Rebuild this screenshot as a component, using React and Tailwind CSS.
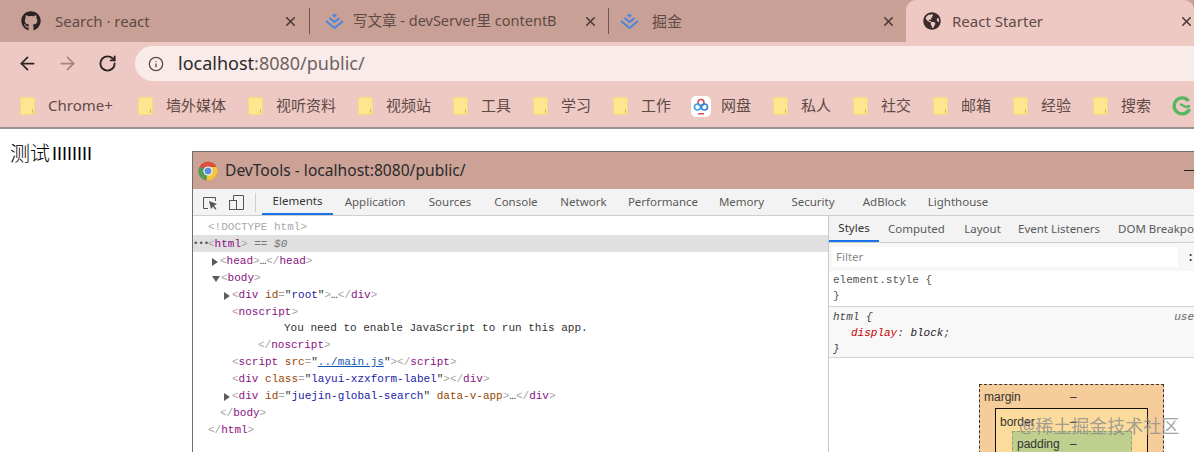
import { ArrowLeft, ArrowRight, RotateCw, Info, X } from 'lucide-react';
import { FaGithub, FaGlobeAmericas } from 'react-icons/fa';

const uiFont = { fontFamily: '"Noto Sans", "Noto Sans CJK SC", sans-serif' };

const bookmarks = [
  { name: 'Chrome+', w: 'w-[118px]' },
  { name: '墙外媒体', w: 'w-[110px]' },
  { name: '视听资料', w: 'w-[110px]' },
  { name: '视频站', w: 'w-[95px]' },
  { name: '工具', w: 'w-[80px]' },
  { name: '学习', w: 'w-[80px]' },
  { name: '工作', w: 'w-[78px]' },
  { name: '网盘', w: 'w-[82px]', pan: true },
  { name: '私人', w: 'w-[80px]' },
  { name: '社交', w: 'w-[80px]' },
  { name: '邮箱', w: 'w-[80px]' },
  { name: '经验', w: 'w-[80px]' },
  { name: '搜索', w: 'w-[79px]' },
];

const devTabs = [
  { name: 'Elements', w: 'w-[71px]', active: true },
  { name: 'Application', w: 'w-[84px]' },
  { name: 'Sources', w: 'w-[66px]' },
  { name: 'Console', w: 'w-[66px]' },
  { name: 'Network', w: 'w-[69px]' },
  { name: 'Performance', w: 'w-[90px]' },
  { name: 'Memory', w: 'w-[67px]' },
  { name: 'Security', w: 'w-[76px]' },
  { name: 'AdBlock', w: 'w-[67px]' },
  { name: 'Lighthouse', w: 'w-[80px]' },
];

function JuejinLogo() {
  return (
    <svg width="19" height="16" viewBox="0 0 19 16" fill="none" className="shrink-0">
      <path d="M9.5 0.5 L12 2.5 L9.5 4.5 L7 2.5 Z" fill="#4a86e0" />
      <path d="M4.5 5 L9.5 9 L14.5 5" stroke="#4a86e0" strokeWidth="2" />
      <path d="M1 8 L9.5 15 L18 8" stroke="#4a86e0" strokeWidth="2" />
    </svg>
  );
}

function ChromeLogo() {
  return (
    <svg width="20" height="20" viewBox="0 0 20 20" className="shrink-0">
      <circle cx="10" cy="10" r="9.5" fill="#d9503f" />
      <path d="M10 10 L1.6 5.5 A9.5 9.5 0 0 0 8.5 19.4 Z" fill="#4f9d58" />
      <path d="M10 6 L18.6 6 A9.5 9.5 0 0 1 8.5 19.4 Z" fill="#f4c63d" />
      <circle cx="10" cy="10" r="4.6" fill="#fff" />
      <circle cx="10" cy="10" r="3.5" fill="#5a8fd8" />
    </svg>
  );
}

function PanLogo() {
  return (
    <div className="flex h-[21px] w-[20px] shrink-0 items-center justify-center rounded-[5px] bg-white">
      <svg width="16" height="18" viewBox="0 0 16 18" fill="none">
        <circle cx="8" cy="5.5" r="3" stroke="#e0484d" strokeWidth="1.6" />
        <circle cx="4.5" cy="10" r="3" stroke="#3aa0e8" strokeWidth="1.6" />
        <circle cx="11.5" cy="10" r="3" stroke="#2f7fe0" strokeWidth="1.6" />
        <rect x="5" y="16" width="6" height="1.5" fill="#e0484d" />
      </svg>
    </div>
  );
}

function ExtensionLogo() {
  return (
    <svg width="20" height="20" viewBox="0 0 20 20" fill="none" className="shrink-0">
      <path d="M16.5 5 A8 8 0 1 0 17.5 13" stroke="#55b860" strokeWidth="3.4" />
      <path d="M8 8 L14 11 L18 10" stroke="#55b860" strokeWidth="2.4" />
    </svg>
  );
}

function Folder() {
  return (
    <div className="relative h-[18px] w-[15px] shrink-0 rounded-[2px] border border-[#f3dc7c] bg-[#fde68f]">
      <div className="absolute bottom-[1px] right-[1px] h-[4px] w-px bg-[#d8b94e]" />
    </div>
  );
}

function Tab({ icon, title, pad, gap, closeGap, width, titleClass = 'text-[15px]' }) {
  return (
    <div className={`flex h-[42px] items-center ${pad} ${width}`}>
      {icon}
      <span className={`overflow-hidden whitespace-nowrap text-[#5f4a46] ${gap} ${titleClass}`}>{title}</span>
      <X size={15} strokeWidth={2.5} className={`ml-auto shrink-0 text-[#4a3a37] ${closeGap}`} />
    </div>
  );
}

function Tag({ children }) {
  return <span className="text-[#881280]">{children}</span>;
}

function Gray({ children }) {
  return <span className="text-[#a8a3a3]">{children}</span>;
}

function Attr({ children }) {
  return <span className="text-[#994500]">{children}</span>;
}

function Val({ children }) {
  return <span className="text-[#1a1aa6]">{children}</span>;
}

function Row({ indent, arrow, children, className = '' }) {
  return (
    <div className={`flex h-[17px] items-center whitespace-pre pt-[2px] ${indent} ${className}`}>
      {arrow === 'right' && <div className="mr-[2px] -ml-[8px] h-0 w-0 border-y-[4px] border-l-[6px] border-y-transparent border-l-[#5c5c5c]" />}
      {arrow === 'down' && <div className="mr-[1px] -ml-[8px] h-0 w-0 border-x-[4px] border-t-[6px] border-x-transparent border-t-[#5c5c5c]" />}
      <span>{children}</span>
    </div>
  );
}

function DomTree() {
  return (
    <div className="w-[636px] shrink-0 border-r border-[#c8c8c8] pt-[2px] text-[11px] text-[#303030]" style={{ fontFamily: '"Liberation Mono", monospace' }}>
      <Row indent="pl-[15px]" className="text-[#a8a8a8]">{'<!DOCTYPE html>'}</Row>
      <div className="flex h-[17px] items-center whitespace-pre bg-[#e0e0e0] pt-[2px]">
        <span className="w-[15px] text-[9px] leading-none text-[#555]">•••</span>
        <span><Gray>{'<'}</Gray><Tag>html</Tag><Gray>{'>'}</Gray><span className="text-[#777]"> == </span><span className="italic text-[#777]">$0</span></span>
      </div>
      <Row indent="pl-[27px]" arrow="right"><Gray>{'<'}</Gray><Tag>head</Tag><Gray>{'>'}</Gray>…<Gray>{'</'}</Gray><Tag>head</Tag><Gray>{'>'}</Gray></Row>
      <Row indent="pl-[27px]" arrow="down"><Gray>{'<'}</Gray><Tag>body</Tag><Gray>{'>'}</Gray></Row>
      <Row indent="pl-[39px]" arrow="right"><Gray>{'<'}</Gray><Tag>div</Tag> <Attr>id</Attr><Gray>=</Gray>"<Val>root</Val>"<Gray>{'>'}</Gray>…<Gray>{'</'}</Gray><Tag>div</Tag><Gray>{'>'}</Gray></Row>
      <Row indent="pl-[39px]"><Gray>{'<'}</Gray><Tag>noscript</Tag><Gray>{'>'}</Gray></Row>
      <Row indent="pl-[91px]" className="-mt-px">You need to enable JavaScript to run this app.</Row>
      <Row indent="pl-[65px]"><Gray>{'</'}</Gray><Tag>noscript</Tag><Gray>{'>'}</Gray></Row>
      <Row indent="pl-[39px]"><Gray>{'<'}</Gray><Tag>script</Tag> <Attr>src</Attr><Gray>=</Gray>"<span className="text-[#1558b0] underline">../main.js</span>"<Gray>{'></'}</Gray><Tag>script</Tag><Gray>{'>'}</Gray></Row>
      <Row indent="pl-[39px]"><Gray>{'<'}</Gray><Tag>div</Tag> <Attr>class</Attr><Gray>=</Gray>"<Val>layui-xzxform-label</Val>"<Gray>{'></'}</Gray><Tag>div</Tag><Gray>{'>'}</Gray></Row>
      <Row indent="pl-[39px]" arrow="right"><Gray>{'<'}</Gray><Tag>div</Tag> <Attr>id</Attr><Gray>=</Gray>"<Val>juejin-global-search</Val>" <Attr>data-v-app</Attr><Gray>{'>'}</Gray>…<Gray>{'</'}</Gray><Tag>div</Tag><Gray>{'>'}</Gray></Row>
      <Row indent="pl-[27px]"><Gray>{'</'}</Gray><Tag>body</Tag><Gray>{'>'}</Gray></Row>
      <Row indent="pl-[15px]"><Gray>{'</'}</Gray><Tag>html</Tag><Gray>{'>'}</Gray></Row>
    </div>
  );
}

function StylesPane() {
  const mono = { fontFamily: '"Liberation Mono", monospace' };
  return (
    <div className="min-w-0 flex-1 text-[11.5px] text-[#5a5a5a]">
      <div className="flex h-[27px] items-end overflow-hidden border-b border-[#cfcfcf] bg-[#f3f3f3] whitespace-nowrap">
        <div className="flex h-[27px] w-[50px] shrink-0 items-center justify-center border-b-2 border-[#1a73e8] text-[#333]">Styles</div>
        <div className="flex h-[27px] w-[75px] shrink-0 items-center justify-center">Computed</div>
        <div className="flex h-[27px] w-[57px] shrink-0 items-center justify-center">Layout</div>
        <div className="flex h-[27px] w-[96px] shrink-0 items-center justify-center">Event Listeners</div>
        <div className="ml-[11px] flex h-[27px] shrink-0 items-center">DOM Breakpoints</div>
      </div>
      <div className="flex h-[28px] items-center bg-[#f7f7f7] pl-[3px]">
        <div className="flex h-[20px] w-[346px] items-center bg-white pl-[4px] text-[#8a8a8a]">Filter</div>
        <span className="ml-[11px] font-bold text-[#333]">:</span>
      </div>
      <div className="h-[36px] border-b border-[#d4d4d4] pl-[4px] pt-[1px] text-[11px] leading-[16px] text-[#555]" style={mono}>
        <div>element.style {'{'}</div>
        <div>{'}'}</div>
      </div>
      <div className="relative h-[51px] border-b border-[#d4d4d4] bg-[#f8f8f8] pl-[4px] pt-[2px] text-[11px] leading-[16px] text-[#444] italic" style={mono}>
        <div>html {'{'}</div>
        <div className="pl-[18px]"><span className="text-[#c80000]">display</span>: <span className="text-[#222]">block</span>;</div>
        <div>{'}'}</div>
        <span className="absolute top-[2px] right-0 text-[#666]">use</span>
      </div>
      <div className="pl-[150px] pt-[26px] text-[12px] text-[#333]" style={{ fontFamily: '"Liberation Sans", sans-serif' }}>
        <div className="h-[80px] w-[185px] border border-dashed border-[#333] bg-[#f7cc9b] pl-[4px] pt-[2px]">
          <div className="flex h-[19px] items-center"><span className="w-[86px]">margin</span><span>–</span></div>
          <div className="ml-[11px] mt-[2px] h-[60px] w-[153px] border border-[#111] bg-[#fbdc9c] pl-[4px] pt-[3px]">
            <div className="flex h-[19px] items-center"><span className="w-[70px]">border</span><span>–</span></div>
            <div className="ml-[12px] h-[40px] w-[120px] border border-dashed border-[#8aa070] bg-[#bfcf8e] pl-[4px] pt-[2px]">
              <div className="flex h-[19px] items-center"><span className="w-[53px]">padding</span><span>–</span></div>
            </div>
          </div>
        </div>
      </div>
    </div>
  );
}

function DevTools() {
  return (
    <div className="absolute left-[192px] top-[151px] h-[301px] w-[1002px] overflow-hidden border-l border-t border-[#6e6e6e] bg-white" style={uiFont}>
      <div className="flex h-[37px] items-center bg-[#cca196] pl-[5px]">
        <ChromeLogo />
        <span className="ml-[7px] text-[15.6px] text-[#2a2a2a]">DevTools - localhost:8080/public/</span>
        <div className="ml-auto h-px w-[10px] bg-[#222]" />
      </div>
      <div className="flex h-[27px] items-end border-b border-[#cfcfcf] bg-[#f3f3f3] text-[11.5px] text-[#5a5a5a]">
        <div className="flex h-[26px] w-[62px] shrink-0 items-center pl-[10px]">
          <svg width="41" height="15" viewBox="0 0 41 15" fill="none" stroke="#555" strokeWidth="1">
            <path d="M5 13.5 H0.5 V2.5 H12.5 V6" />
            <path d="M6 6 L14 9 L11 10.5 L13.5 14 L12 14.5 L10 11.5 L8 14 Z" fill="#555" stroke="none" />
            <rect x="26.5" y="5.5" width="7" height="9" />
            <path d="M30.5 5.5 V0.5 H40.5 V14.5 H33.5" />
          </svg>
        </div>
        <div className="mr-[6px] h-[19px] self-center border-l border-[#cfcfcf]" />
        {devTabs.map(tab => (
          <div
            key={tab.name}
            className={`flex h-[27px] shrink-0 items-center justify-center pt-[1px] ${tab.w} ${tab.active ? 'border-b-2 border-[#1a73e8] text-[#333]' : ''}`}
          >
            {tab.name}
          </div>
        ))}
      </div>
      <div className="flex">
        <DomTree />
        <StylesPane />
      </div>
    </div>
  );
}

export default function App() {
  return (
    <div className="relative h-[452px] w-[1194px] overflow-hidden bg-white" style={uiFont}>
      {/* tab strip */}
      <div className="flex h-[42px] bg-[#c8a096]">
        <div className="flex items-center">
          <Tab width="w-[309px]" pad="pl-[21px]" gap="ml-[14px]" closeGap="mr-[11px]" title="Search · react" icon={<FaGithub size={20} className="shrink-0 text-[#2c2423]" />} />
          <div className="h-[26px] w-px bg-[#6e5a55]" />
          <Tab width="w-[298px]" pad="pl-[15px]" gap="ml-[9px]" closeGap="mr-[10px]" titleClass="text-[14.5px]" title="写文章 - devServer里 contentB" icon={<JuejinLogo />} />
          <div className="h-[26px] w-px bg-[#6e5a55]" />
          <Tab width="w-[297px]" pad="pl-[11px]" gap="ml-[13px]" closeGap="mr-[10px]" title="掘金" icon={<JuejinLogo />} />
        </div>
        <div className="flex flex-1 items-center rounded-t-[10px] bg-[#eec9c4] pl-[17px]">
          <FaGlobeAmericas size={18} className="shrink-0 text-[#3a2c2a]" />
          <span className="ml-[11px] text-[15px] text-[#5f4a46]">React Starter</span>
          <X size={15} strokeWidth={2.5} className="ml-auto text-[#4a3a37]" />
        </div>
      </div>

      {/* toolbar */}
      <div className="flex h-[43px] items-center bg-[#eec9c4] pl-[17px]">
        <ArrowLeft size={21} strokeWidth={2} className="text-[#2e2524]" />
        <ArrowRight size={21} strokeWidth={2} className="ml-[19px] text-[#a08581]" />
        <RotateCw size={19} strokeWidth={2.4} className="ml-[20px] text-[#2e2524]" />
        <div className="ml-[18px] flex h-[35px] flex-1 items-center rounded-l-full bg-[#f9ebe9] pl-[13px] text-[18px]">
          <Info size={16} strokeWidth={2} className="text-[#5a4a48]" />
          <span className="ml-[14px] text-[#2a2a2a]">localhost</span>
          <span className="text-[#6f6361]">:8080/public/</span>
        </div>
      </div>

      {/* bookmarks */}
      <div className="flex h-[42px] items-center overflow-hidden bg-[#eec9c4] pl-[20px] text-[15px] text-[#5f4a46]">
        {bookmarks.map(b => (
          <div key={b.name} className={`flex shrink-0 items-center ${b.pan ? 'gap-[10px]' : 'gap-[13px]'} ${b.w}`}>
            {b.pan ? <PanLogo /> : <Folder />}
            <span className="-mt-[1px]">{b.name}</span>
          </div>
        ))}
        <ExtensionLogo />
      </div>
      <div className="h-[2px] bg-[#9c9290]" />

      {/* page body */}
      <div className="flex items-center pl-[10px] pt-[10px] text-[18px] text-black" style={{ fontFamily: '"Liberation Sans", "Noto Sans CJK SC", sans-serif' }}>
        <span className="text-[20px] font-light">测试</span>
        <span className="ml-[2px]">IIIIIIII</span>
      </div>
      <DevTools />

      {/* watermark */}
      <div className="absolute left-[1019px] top-[413px] text-[18px] whitespace-nowrap text-[#8c8c8c]/80">@稀土掘金技术社区</div>
    </div>
  );
}
